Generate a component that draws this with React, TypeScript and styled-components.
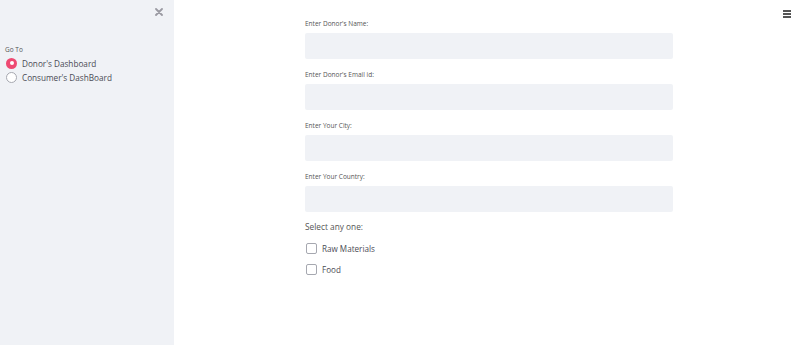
import React from "react";
import styled, { createGlobalStyle } from "styled-components";

const Global = createGlobalStyle`
  html, body { margin: 0; padding: 0; }
  body { font-family: "Open Sans", "Noto Sans", sans-serif; color: #262730; background: #fff; }
  #root { height: 345px; }
`;

const Page = styled.div`
  display: flex;
  width: 806px;
  height: 345px;
  overflow: hidden;
`;

const Sidebar = styled.aside`
  width: 174px;
  flex: 0 0 174px;
  background: #f0f2f6;
  display: flex;
  flex-direction: column;
  box-sizing: border-box;
  padding: 8px 0 0 6px;
`;

const CloseRow = styled.div`
  display: flex;
  justify-content: flex-end;
  padding-right: 11px;
  height: 12px;
`;

const GoTo = styled.div`
  margin-top: 25px;
  margin-left: -1px;
  font-size: 6.5px;
  color: #555;
  line-height: 9px;
`;

const RadioList = styled.div`
  display: flex;
  flex-direction: column;
  gap: 2px;
  margin-top: 3px;
`;

const RadioRow = styled.div`
  display: flex;
  align-items: center;
  gap: 5px;
  height: 12px;
  font-size: 8.2px;
  color: #4a4b55;
`;

const RadioDot = styled.span<{ $on?: boolean }>`
  width: 11px;
  height: 11px;
  box-sizing: border-box;
  border-radius: 50%;
  flex: 0 0 11px;
  background: ${(p) => (p.$on ? "#ee4a72" : "#fff")};
  border: ${(p) => (p.$on ? "none" : "1px solid #a6a8b0")};
  display: flex;
  align-items: center;
  justify-content: center;
  &::after {
    content: "";
    display: ${(p) => (p.$on ? "block" : "none")};
    width: 4px;
    height: 4px;
    border-radius: 50%;
    background: #fff;
  }
`;

const Main = styled.main`
  flex: 1;
  position: relative;
  display: flex;
  justify-content: center;
`;

const Menu = styled.div`
  position: absolute;
  top: 10px;
  right: 15px;
  width: 8px;
  display: flex;
  flex-direction: column;
  gap: 1.5px;
  & > span { display: block; height: 1.5px; background: #555; }
`;

const Form = styled.div`
  width: 368px;
  padding-top: 19px;
  margin-left: -2px;
  display: flex;
  flex-direction: column;
`;

const Field = styled.div`
  display: flex;
  flex-direction: column;
  margin-bottom: 11px;
`;

const Label = styled.label`
  font-size: 6.5px;
  color: #555;
  line-height: 9px;
  height: 9px;
  margin-bottom: 5px;
`;

const Input = styled.div`
  height: 26px;
  background: #f0f2f6;
  border-radius: 2px;
`;

const SelectLabel = styled.div`
  font-size: 8.3px;
  color: #555;
  line-height: 12px;
  height: 12px;
  margin-top: -2px;
`;

const CheckList = styled.div`
  display: flex;
  flex-direction: column;
  gap: 9px;
  margin-top: 9px;
`;

const CheckRow = styled.div`
  display: flex;
  align-items: center;
  gap: 5px;
  height: 12px;
  font-size: 8.1px;
  color: #4a4b55;
  padding-left: 1px;
`;

const Box = styled.span`
  width: 11px;
  height: 11px;
  box-sizing: border-box;
  border: 1px solid #a6a8b0;
  border-radius: 2px;
  background: #fff;
`;

const fields = [
  "Enter Donor's Name:",
  "Enter Donor's Email id:",
  "Enter Your City:",
  "Enter Your Country:",
];

export default function App() {
  return (
    <>
      <Global />
      <Page>
        <Sidebar>
          <CloseRow>
            <svg width="8" height="8" viewBox="0 0 8 8">
              <path d="M1 1L7 7M7 1L1 7" stroke="#9a9aa2" strokeWidth="1.8" strokeLinecap="round" />
            </svg>
          </CloseRow>
          <GoTo>Go To</GoTo>
          <RadioList>
            <RadioRow>
              <RadioDot $on />
              Donor's Dashboard
            </RadioRow>
            <RadioRow>
              <RadioDot />
              Consumer's DashBoard
            </RadioRow>
          </RadioList>
        </Sidebar>
        <Main>
          <Menu>
            <span />
            <span />
            <span />
          </Menu>
          <Form>
            {fields.map((f) => (
              <Field key={f}>
                <Label>{f}</Label>
                <Input />
              </Field>
            ))}
            <SelectLabel>Select any one:</SelectLabel>
            <CheckList>
              <CheckRow>
                <Box />
                Raw Materials
              </CheckRow>
              <CheckRow>
                <Box />
                Food
              </CheckRow>
            </CheckList>
          </Form>
        </Main>
      </Page>
    </>
  );
}
